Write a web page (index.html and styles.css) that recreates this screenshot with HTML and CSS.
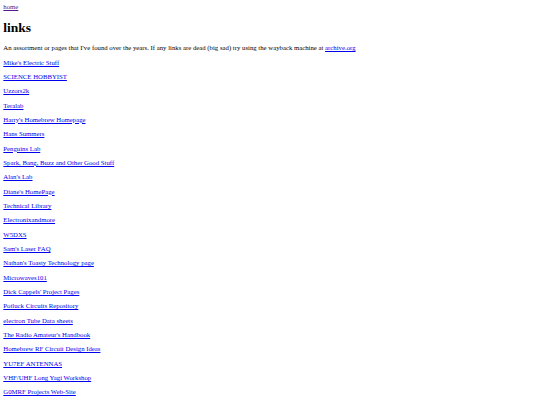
FILE: index.html
```html
<!DOCTYPE html>
<html>
<head>
<meta charset="utf-8">
<title>links</title>
<link rel="stylesheet" href="styles.css">
</head>
<body class="page">
<a class="home" href="#">home</a>
<h1 class="title">links</h1>
<p class="para">An assortment or pages that I've found over the years. If any links are dead (big sad) try using the wayback machine at <a class="link" href="#">archive.org</a></p>
<p class="para"><a class="link" href="#">Mike's Electric Stuff</a></p>
<p class="para"><a class="link" href="#">SCIENCE HOBBYIST</a></p>
<p class="para"><a class="link" href="#">Uzzors2k</a></p>
<p class="para"><a class="link" href="#">Teralab</a></p>
<p class="para"><a class="link" href="#">Harry's Homebrew Homepage</a></p>
<p class="para"><a class="link" href="#">Hans Summers</a></p>
<p class="para"><a class="link" href="#">Penguins Lab</a></p>
<p class="para"><a class="link" href="#">Spark, Bang, Buzz and Other Good Stuff</a></p>
<p class="para"><a class="link" href="#">Alan's Lab</a></p>
<p class="para"><a class="link" href="#">Diane's HomePage</a></p>
<p class="para"><a class="link" href="#">Technical Library</a></p>
<p class="para"><a class="link" href="#">Electronixandmore</a></p>
<p class="para"><a class="link" href="#">W5DXS</a></p>
<p class="para"><a class="link" href="#">Sam's Laser FAQ</a></p>
<p class="para"><a class="link" href="#">Nathan's Toasty Technology page</a></p>
<p class="para"><a class="link" href="#">Microwaves101</a></p>
<p class="para"><a class="link" href="#">Dick Cappels' Project Pages</a></p>
<p class="para"><a class="link" href="#">Potluck Circuits Repository</a></p>
<p class="para"><a class="link" href="#">electron Tube Data sheets</a></p>
<p class="para"><a class="link" href="#">The Radio Amateur's Handbook</a></p>
<p class="para"><a class="link" href="#">Homebrew RF Circuit Design Ideas</a></p>
<p class="para"><a class="link" href="#">YU7EF ANTENNAS</a></p>
<p class="para"><a class="link" href="#">VHF/UHF Long Yagi Workshop</a></p>
<p class="para"><a class="link" href="#">G0MRF Projects Web-Site</a></p>
<p class="para"><a class="link" href="#">N5DUX Radio Web Site</a></p>
<p class="para"><a class="link" href="#">Ham Radio Projects</a></p>
</body>
</html>
```
FILE: styles.css
```css
html {
  background: #ffffff;
}
.page {
  margin: 3.333px;
  font-family: "Liberation Serif", "Times New Roman", serif;
  font-size: 6.75px;
  line-height: 7.68px;
  color: #000000;
}
.title {
  font-size: 13.5px;
  line-height: 15.33px;
  font-weight: bold;
  margin: 8.93px 0;
}
.para {
  margin: 6.67px 0;
}
.link {
  color: #0000ee;
}
.home {
  color: #551a8b;
}
```
